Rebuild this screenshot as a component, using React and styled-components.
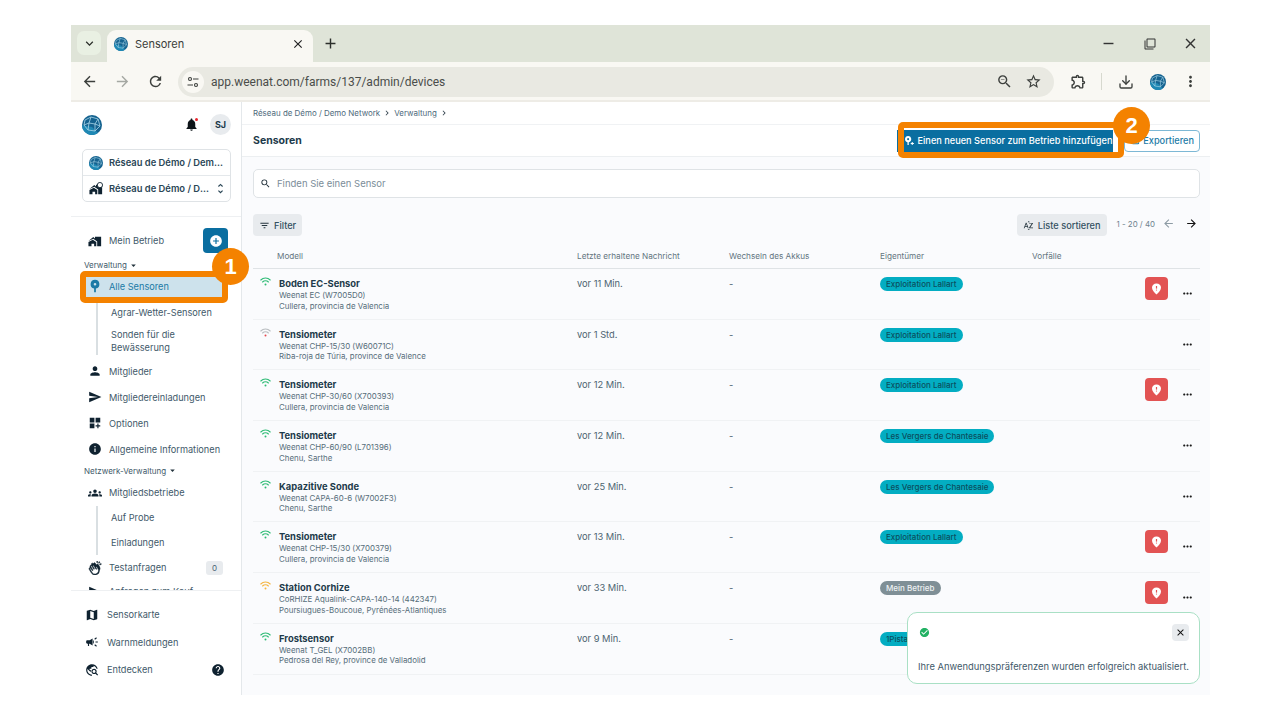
import React from "react";
import styled, { createGlobalStyle } from "styled-components";
import {
  MdAddCircle,
  MdArrowBack,
  MdArrowForward,
  MdCampaign,
  MdCheckCircle,
  MdClose,
  MdDashboardCustomize,
  MdFilterList,
  MdFilterNone,
  MdHelp,
  MdInfo,
  MdKeyboardArrowDown,
  MdAdd,
  MdMap,
  MdMoreHoriz,
  MdMoreVert,
  MdNotifications,
  MdOutlineExtension,
  MdOutlineFileUpload,
  MdOutlineStarBorder,
  MdPerson,
  MdRefresh,
  MdRemove,
  MdSearch,
  MdSend,
  MdSortByAlpha,
  MdTravelExplore,
  MdUnfoldMore,
  MdGroups,
  MdZoomOut,
  MdChevronRight,
  MdArrowDropDown,
} from "react-icons/md";
import { PiHandsClappingFill } from "react-icons/pi";
import { LuDownload } from "react-icons/lu";

const GlobalStyle = createGlobalStyle`
  html, body {
    margin: 0;
    background: #fff;
    font-family: Inter, "Noto Sans", sans-serif;
    color: #1d3a4a;
  }
  * { box-sizing: border-box; }
`;

const Window = styled.div`
  position: relative;
  width: 1139px;
  height: 670px;
  margin: 25px 0 0 71px;
  display: flex;
  flex-direction: column;
  overflow: hidden;
  background: #fff;
`;

const TabStrip = styled.div`
  height: 37px;
  flex: none;
  background: #dfe4d8;
  display: flex;
  align-items: flex-end;
  padding-left: 6px;
  color: #2c2f2b;
`;

const TabListButton = styled.div`
  width: 24px;
  height: 24px;
  margin: 0 6px 7px 0;
  border-radius: 7px;
  background: #e9f0e3;
  display: flex;
  align-items: center;
  justify-content: center;
  font-size: 15px;
`;

const Tab = styled.div`
  width: 206px;
  height: 32px;
  background: #f9f8f3;
  border-radius: 9px 9px 0 0;
  display: flex;
  align-items: center;
  padding: 0 8px 4px 7px;
  gap: 7px;
  font-size: 11px;
  color: #3a3d3a;
  svg:last-child {
    margin-left: auto;
    font-size: 14px;
    color: #222;
  }
`;

const NewTab = styled.div`
  margin: 0 0 8px 9px;
  font-size: 17px;
  height: 22px;
  display: flex;
  align-items: center;
`;

const WindowControls = styled.div`
  margin-left: auto;
  height: 100%;
  display: flex;
  align-items: center;
  gap: 26.5px;
  padding: 0 11px 0 0;
  font-size: 17px;
  color: #333;
`;

const Toolbar = styled.div`
  height: 40px;
  flex: none;
  background: #f9f8f3;
  border-bottom: 2px solid #eeece6;
  display: flex;
  align-items: center;
  padding: 1px 11px 0 10px;
  color: #3c3f3c;
  font-size: 17px;
`;

const NavArrows = styled.div`
  display: flex;
  gap: 16px;
  margin-right: 14px;
`;

const Faded = styled.span`
  display: flex;
  color: #a5a8a2;
`;

const UrlBar = styled.div`
  width: 877px;
  height: 30px;
  border-radius: 15px;
  background: #e9e9e2;
  display: flex;
  align-items: center;
  padding: 0 12px 0 4px;
  margin-right: 16px;
`;

const SiteInfo = styled.div`
  width: 22px;
  height: 22px;
  border-radius: 50%;
  background: #f9f8f3;
  display: flex;
  align-items: center;
  justify-content: center;
  margin-right: 7px;
`;

const UrlText = styled.span`
  font-family: Roboto, sans-serif;
  font-size: 12px;
  color: #4a4d4a;
  flex: 1;
`;

const UrlActions = styled.div`
  display: flex;
  gap: 12px;
`;

const ToolbarDivider = styled.div`
  width: 1px;
  height: 17px;
  background: #d7d9cf;
  margin: 0 16px 0 14px;
`;

const ToolbarIcons = styled.div`
  display: flex;
  align-items: center;
  gap: 16px;
`;

const AppArea = styled.div`
  flex: 1;
  display: flex;
  min-height: 0;
`;

const Sidebar = styled.aside`
  width: 171px;
  flex: none;
  border-right: 1px solid #e4e8eb;
  background: #fff;
  display: flex;
  flex-direction: column;
`;

const SidebarTop = styled.div`
  height: 115px;
  flex: none;
  padding: 11px 10px 0 11px;
  border-bottom: 1px solid #eef0f2;
`;

const BrandRow = styled.div`
  display: flex;
  align-items: center;
  height: 23px;
  margin-bottom: 13px;
`;

const BellWrap = styled.div`
  position: relative;
  margin-left: auto;
  margin-right: 11px;
  display: flex;
  font-size: 15px;
  color: #0d1418;
  &::after {
    content: "";
    position: absolute;
    top: 1px;
    right: 1px;
    width: 3px;
    height: 3px;
    border-radius: 50%;
    background: #e9262e;
  }
`;

const Avatar = styled.div`
  width: 21px;
  height: 21px;
  border-radius: 50%;
  background: #e8ebee;
  display: flex;
  align-items: center;
  justify-content: center;
  font-size: 9px;
  font-weight: 700;
  color: #1d3a4a;
`;

const Selector = styled.div`
  width: 149px;
  height: 53px;
  border: 1px solid #dfe3e6;
  border-radius: 5px;
  display: flex;
  flex-direction: column;
`;

const SelectorRow = styled.div`
  flex: 1;
  display: flex;
  align-items: center;
  gap: 6px;
  padding: 0 3px 0 6px;
  font-size: 9.4px;
  font-weight: 600;
  color: #2a4656;
  & + & {
    border-top: 1px solid #e4e8eb;
  }
  svg {
    flex: none;
  }
`;

const SelectorText = styled.span`
  flex: 1;
  min-width: 0;
  white-space: nowrap;
  overflow: hidden;
  text-overflow: ellipsis;
`;

const UnfoldIcon = styled(MdUnfoldMore)`
  margin-left: -4px;
`;

const NavScroll = styled.nav`
  flex: 1;
  min-height: 0;
  overflow: hidden;
  padding: 11px 13px 0 14px;
`;

const NavRow = styled.div`
  height: ${(p) => p.$height || 26}px;
  display: flex;
  align-items: center;
  gap: 7px;
  padding-left: 3px;
  font-size: 9.2px;
  color: #3f5a6a;
  white-space: nowrap;
  svg {
    flex: none;
    font-size: 14px;
    color: #0f2230;
  }
`;

const NavActive = styled(NavRow)`
  color: #1b7aa6;
  background: #cde2ec;
  margin-right: 6px;
  svg {
    color: #1b7aa6;
  }
`;

const SectionLabel = styled.div`
  height: 14px;
  margin: ${(p) => p.$top || 0}px 0 ${(p) => p.$bottom || 1}px -1px;
  display: flex;
  align-items: center;
  font-size: 8px;
  color: #3f5a6a;
  svg {
    font-size: 11px;
    margin-left: 1px;
    color: #22323c;
  }
`;

const AddButton = styled.div`
  width: 25px;
  height: 25px;
  margin-left: auto;
  border-radius: 4px;
  background: #0a6ea0;
  display: flex;
  align-items: center;
  justify-content: center;
  svg {
    color: #fff;
    font-size: 14px;
  }
`;

const SubList = styled.div`
  margin: 0 0 ${(p) => p.$gap || 0}px 11px;
  padding-left: 13px;
  border-left: 2px solid #d9dfe2;
  font-size: 9.2px;
  color: #3f5a6a;
`;

const SubItem = styled.div`
  min-height: ${(p) => p.$height || 24.5}px;
  display: flex;
  align-items: center;
  line-height: 13px;
`;

const CountBadge = styled.span`
  margin-left: auto;
  margin-right: 5px;
  width: 17px;
  height: 14px;
  border-radius: 3px;
  background: #e8ebee;
  display: flex;
  align-items: center;
  justify-content: center;
  font-size: 8px;
  color: #4b6474;
`;

const ClapIcon = styled(PiHandsClappingFill)`
  stroke: #0f2230;
  stroke-width: 10px;
`;

const SidebarFooter = styled.div`
  height: 105px;
  flex: none;
  border-top: 1px solid #eef0f2;
  padding: 10px 13px 0 14px;
`;

const FooterRow = styled(NavRow)`
  height: 27.5px;
  padding-left: 0;
  gap: 8px;
  color: #3f5a6a;
`;

const HelpIcon = styled(MdHelp)`
  margin-left: auto;
  margin-right: 3px;
`;

const Main = styled.main`
  flex: 1;
  min-width: 0;
  background: #fafbfd;
  display: flex;
  flex-direction: column;
`;

const Breadcrumbs = styled.div`
  height: 23px;
  flex: none;
  background: #fff;
  border-bottom: 1px solid #f0f2f4;
  display: flex;
  align-items: center;
  padding-left: 11px;
  font-size: 7.95px;
  color: #4e6a7c;
  svg {
    font-size: 10px;
    margin: 0 2px;
    color: #33424d;
  }
`;

const PageHeader = styled.div`
  height: 32px;
  flex: none;
  background: #fff;
  border-bottom: 1px solid #eceff1;
  display: flex;
  align-items: center;
  padding: 0 10px 0 11px;
  justify-content: space-between;
`;

const PageTitle = styled.h1`
  margin: 0;
  font-size: 10.5px;
  font-weight: 700;
  color: #1d3a4a;
`;

const HeaderActions = styled.div`
  display: flex;
  align-items: center;
  gap: 11px;
`;

const PrimaryButton = styled.div`
  height: 22px;
  width: 216px;
  display: flex;
  align-items: center;
  justify-content: center;
  gap: 3px;
  padding-left: 6px;
  background: #0a6ea0;
  color: #fff;
  font-size: 9.2px;
  font-weight: 500;
  white-space: nowrap;
`;

const ExportButton = styled.div`
  height: 22px;
  width: 76px;
  border: 1px solid #7db8d5;
  border-radius: 4px;
  display: flex;
  align-items: center;
  justify-content: flex-end;
  padding-right: 5px;
  gap: 2px;
  color: #1b7aa6;
  background: #fff;
  font-size: 9.2px;
  font-weight: 500;
`;

const Content = styled.div`
  flex: 1;
  min-height: 0;
  padding: 12px 10px 0 11px;
`;

const SearchBox = styled.div`
  height: 29px;
  background: #fff;
  border: 1px solid #dfe3e6;
  border-radius: 5px;
  display: flex;
  align-items: center;
  gap: 6px;
  padding-left: 6px;
  font-size: 9.5px;
  color: #7b8d99;
  svg {
    font-size: 11px;
    color: #1d2c36;
  }
`;

const FilterBar = styled.div`
  margin-top: 16px;
  height: 22px;
  display: flex;
  align-items: center;
  padding-right: 2px;
`;

const GreyButton = styled.div`
  height: 22px;
  padding: 0 6px;
  border-radius: 4px;
  background: #e8ebee;
  display: flex;
  align-items: center;
  gap: 4px;
  font-size: 9.2px;
  font-weight: 500;
  color: #33505f;
  svg {
    font-size: 11px;
    color: #26363f;
  }
`;

const Pager = styled.div`
  display: flex;
  align-items: center;
  margin-left: 10px;
  font-size: 7.9px;
  color: #6f838f;
  gap: 7px;
  margin-top: -3px;
  svg {
    font-size: 13px;
  }
`;

const PagerSpacer = styled.div`
  flex: 1;
`;

const PrevArrow = styled(MdArrowBack)`
  color: #8d9ba4;
`;

const NextArrow = styled(MdArrowForward)`
  color: #111;
  margin-left: 3px;
`;

const grid = "26px 298px 152px 151px 152px 1fr";

const TableHead = styled.div`
  margin-top: 11px;
  height: 22px;
  display: grid;
  grid-template-columns: ${grid};
  align-items: center;
  border-bottom: 1px solid #dfe3e6;
  font-size: 8.2px;
  color: #63757f;
  padding-bottom: 3px;
`;

const ModelHead = styled.span`
  margin-left: -2px;
`;

const Row = styled.div`
  height: 50.7px;
  display: grid;
  grid-template-columns: ${grid};
  border-bottom: 1px solid #f0f2f4;
  padding-top: 9px;
  font-size: 9.3px;
  color: #4d6471;
`;

const Signal = styled.div`
  padding: 0 0 0 7px;
  margin-top: -1px;
  line-height: 0;
`;

const ModelName = styled.div`
  font-size: 9.4px;
  font-weight: 700;
  line-height: 12px;
  color: #1d3a4a;
`;

const ModelMeta = styled.div`
  font-size: 7.9px;
  line-height: 10.5px;
  color: #566d7a;
`;

const CellText = styled.div`
  line-height: 12px;
`;

const TagCell = styled.div`
  margin-top: -1px;
`;

const Tag = styled.span`
  display: inline-flex;
  align-items: center;
  height: 14px;
  padding: 0 6px;
  border-radius: 7px;
  font-size: 8px;
  font-weight: 500;
  white-space: nowrap;
  background: ${(p) => (p.$grey ? "#7f8f96" : "#03adc2")};
  color: ${(p) => (p.$grey ? "#eef2f3" : "#0b4f5e")};
`;

const Actions = styled.div`
  display: flex;
  justify-content: flex-end;
  align-items: flex-start;
  padding-right: 6px;
  gap: 13px;
  margin-top: -1px;
`;

const AlertButton = styled.div`
  width: 23px;
  height: 23px;
  border-radius: 4px;
  background: #e25353;
  display: flex;
  align-items: center;
  justify-content: center;
`;

const Dots = styled(MdMoreHoriz)`
  margin-top: 10px;
  font-size: 13px;
  color: #1a1a1a;
`;

const Highlight = styled.div`
  position: absolute;
  left: ${(p) => p.$x}px;
  top: ${(p) => p.$y}px;
  width: ${(p) => p.$w}px;
  height: ${(p) => p.$h}px;
  border: 6px solid #f48200;
  border-radius: 5px;
  pointer-events: none;
`;

const StepBadge = styled.div`
  position: absolute;
  left: ${(p) => p.$x}px;
  top: ${(p) => p.$y}px;
  width: 37px;
  height: 37px;
  border-radius: 50%;
  background: #f48200;
  color: #fff;
  font-family: "Liberation Sans", sans-serif;
  font-size: 22px;
  font-weight: 700;
  display: flex;
  align-items: center;
  justify-content: center;
`;

const Toast = styled.div`
  position: absolute;
  right: 10px;
  bottom: 11px;
  width: 293px;
  height: 72px;
  background: #fff;
  border: 1px solid #a9e0c5;
  border-radius: 10px;
  padding: 10px 10px 0 10px;
`;

const ToastTop = styled.div`
  display: flex;
  justify-content: space-between;
  align-items: center;
  height: 18px;
  padding-left: 1px;
  svg {
    font-size: 11px;
  }
`;

const ToastCheck = styled(MdCheckCircle)`
  color: #22b163;
`;

const ToastClose = styled.div`
  width: 17px;
  height: 17px;
  border-radius: 4px;
  background: #e8ebee;
  display: flex;
  align-items: center;
  justify-content: center;
  color: #111;
`;

const ToastText = styled.div`
  margin-top: 20px;
  font-size: 9.37px;
  color: #3f5a6a;
  white-space: nowrap;
`;

const Globe = ({ size = 20 }) => (
  <svg width={size} height={size} viewBox="0 0 20 20">
    <circle cx="10" cy="10" r="10" fill="#14628f" />
    <path d="M0 10 A10 10 0 0 0 16 18 L10 12 Z" fill="#1f88b4" />
    <path
      d="M3 5 L9 2 L16 4 L18 11 L13 16 L6 15 L2 10 Z M9 2 L7 8 L13 9 L16 4 M7 8 L2 10 M7 8 L6 15 M13 9 L13 16 M13 9 L18 11"
      fill="none"
      stroke="#a9d6e8"
      strokeWidth="0.8"
    />
  </svg>
);

const FarmIcon = ({ size = 15, check }) => (
  <svg width={size} height={size} viewBox="0 0 16 16">
    <path
      d="M0.5 8 L6 3.5 L8 5 V3 H15 V14 H10.5 V8.5 L6 5.5 L5.5 5.8 Z M0.5 9 L5.5 6.5 L9.5 9 V14 H7 V11 H4 V14 H0.5 Z"
      fill="#0f2230"
    />
    {check && <circle cx="12.5" cy="3.5" r="3" fill="#fff" stroke="#0f2230" />}
  </svg>
);

const SiteInfoIcon = () => (
  <svg width="12" height="12" viewBox="0 0 12 12" fill="none" stroke="#3c3f3c" strokeWidth="1.1">
    <circle cx="3" cy="3" r="1.5" />
    <path d="M6 3 H11.5 M0.5 9 H6" />
    <circle cx="9" cy="9" r="1.5" />
  </svg>
);

const SensorIcon = () => (
  <svg width="14" height="14" viewBox="0 0 16 16">
    <path
      d="M8 1 A5 5 0 0 1 9 10.9 V15 H7 V10.9 A5 5 0 0 1 8 1 Z M8 4.5 A1.5 1.5 0 1 0 8 7.5 A1.5 1.5 0 1 0 8 4.5 Z"
      fill="#1b7aa6"
      fillRule="evenodd"
    />
  </svg>
);

const AddSensorIcon = () => (
  <svg width="11" height="11" viewBox="0 0 12 12">
    <path
      d="M4.5 1 A3.5 3.5 0 0 1 5.2 7.9 V11 H3.8 V7.9 A3.5 3.5 0 0 1 4.5 1 Z M4.5 3.4 A1.1 1.1 0 1 0 4.5 5.6 A1.1 1.1 0 1 0 4.5 3.4 Z"
      fill="#fff"
      fillRule="evenodd"
    />
    <path d="M9 7.5 V11 M7.3 9.2 H10.8" stroke="#fff" strokeWidth="1.1" />
  </svg>
);

const PinIcon = () => (
  <svg width="11" height="12" viewBox="0 0 11 12">
    <path
      d="M5.5 0.5 C8.2 0.5 10 2.4 10 4.8 C10 7.2 7.6 9.6 5.5 11.5 C3.4 9.6 1 7.2 1 4.8 C1 2.4 2.8 0.5 5.5 0.5 Z"
      fill="#fff"
    />
    <path d="M5.5 3 V5.6" stroke="#e25353" strokeWidth="1.2" />
    <circle cx="5.5" cy="7" r="0.6" fill="#e25353" />
  </svg>
);

const WifiIcon = ({ color, dot }) => (
  <svg width="11" height="9" viewBox="0 0 11 9">
    <g fill="none" stroke={color} strokeWidth="1.1" strokeLinecap="round">
      <path d="M0.8 3 A6.6 6.6 0 0 1 10.2 3" />
      <path d="M2.6 5 A4 4 0 0 1 8.4 5" />
    </g>
    <circle cx="5.5" cy="7.4" r="1" fill={dot || color} />
  </svg>
);

const sensors = [
  { name: "Boden EC-Sensor", model: "Weenat EC (W7005D0)", place: "Cullera, provincia de Valencia", last: "vor 11 Min.", owner: "Exploitation Lallart", color: "#2dbb75", alert: true },
  { name: "Tensiometer", model: "Weenat CHP-15/30 (W60071C)", place: "Riba-roja de Túria, province de Valence", last: "vor 1 Std.", owner: "Exploitation Lallart", color: "#b9bdc0", dot: "#e5484d" },
  { name: "Tensiometer", model: "Weenat CHP-30/60 (X700393)", place: "Cullera, provincia de Valencia", last: "vor 12 Min.", owner: "Exploitation Lallart", color: "#2dbb75", alert: true },
  { name: "Tensiometer", model: "Weenat CHP-60/90 (L701396)", place: "Chenu, Sarthe", last: "vor 12 Min.", owner: "Les Vergers de Chantesaie", color: "#2dbb75" },
  { name: "Kapazitive Sonde", model: "Weenat CAPA-60-6 (W7002F3)", place: "Chenu, Sarthe", last: "vor 25 Min.", owner: "Les Vergers de Chantesaie", color: "#2dbb75" },
  { name: "Tensiometer", model: "Weenat CHP-15/30 (X700379)", place: "Cullera, provincia de Valencia", last: "vor 13 Min.", owner: "Exploitation Lallart", color: "#2dbb75", alert: true },
  { name: "Station Corhize", model: "CoRHIZE Aqualink-CAPA-140-14 (442347)", place: "Poursiugues-Boucoue, Pyrénées-Atlantiques", last: "vor 33 Min.", owner: "Mein Betrieb", grey: true, color: "#f5b53f", alert: true },
  { name: "Frostsensor", model: "Weenat T_GEL (X7002BB)", place: "Pedrosa del Rey, province de Valladolid", last: "vor 9 Min.", owner: "1Pistache", color: "#2dbb75" },
];

const SidebarNav = () => (
  <Sidebar>
    <SidebarTop>
      <BrandRow>
        <Globe size={20} />
        <BellWrap>
          <MdNotifications />
        </BellWrap>
        <Avatar>SJ</Avatar>
      </BrandRow>
      <Selector>
        <SelectorRow>
          <Globe size={14} />
          <SelectorText>Réseau de Démo / Demo Network</SelectorText>
        </SelectorRow>
        <SelectorRow>
          <FarmIcon size={14} check />
          <SelectorText>Réseau de Démo / Demo Network</SelectorText>
          <UnfoldIcon size={13} />
        </SelectorRow>
      </Selector>
    </SidebarTop>
    <NavScroll>
      <NavRow $height={25}>
        <FarmIcon size={14} />
        Mein Betrieb
        <AddButton>
          <MdAddCircle />
        </AddButton>
      </NavRow>
      <SectionLabel $top={5}>
        Verwaltung <MdArrowDropDown />
      </SectionLabel>
      <NavActive>
        <SensorIcon />
        Alle Sensoren
      </NavActive>
      <SubList $gap={3}>
        <SubItem $height={27}>Agrar-Wetter-Sensoren</SubItem>
        <SubItem $height={29}>
          Sonden für die
          <br />
          Bewässerung
        </SubItem>
      </SubList>
      <NavRow>
        <MdPerson />
        Mitglieder
      </NavRow>
      <NavRow>
        <MdSend />
        Mitgliedereinladungen
      </NavRow>
      <NavRow>
        <MdDashboardCustomize />
        Optionen
      </NavRow>
      <NavRow>
        <MdInfo />
        Allgemeine Informationen
      </NavRow>
      <SectionLabel $top={1.5} $bottom={2}>
        Netzwerk-Verwaltung <MdArrowDropDown />
      </SectionLabel>
      <NavRow>
        <MdGroups />
        Mitgliedsbetriebe
      </NavRow>
      <SubList>
        <SubItem>Auf Probe</SubItem>
        <SubItem>Einladungen</SubItem>
      </SubList>
      <NavRow>
        <ClapIcon />
        Testanfragen
        <CountBadge>0</CountBadge>
      </NavRow>
      <NavRow $height={22}>
        <MdSend />
        Anfragen zum Kauf
      </NavRow>
    </NavScroll>
    <SidebarFooter>
      <FooterRow>
        <MdMap />
        Sensorkarte
      </FooterRow>
      <FooterRow>
        <MdCampaign />
        Warnmeldungen
      </FooterRow>
      <FooterRow>
        <MdTravelExplore />
        Entdecken
        <HelpIcon />
      </FooterRow>
    </SidebarFooter>
  </Sidebar>
);

const App = () => (
  <>
    <GlobalStyle />
    <Window>
      <TabStrip>
        <TabListButton>
          <MdKeyboardArrowDown />
        </TabListButton>
        <Tab>
          <Globe size={14} />
          Sensoren
          <MdClose />
        </Tab>
        <NewTab>
          <MdAdd />
        </NewTab>
        <WindowControls>
          <MdRemove />
          <MdFilterNone size={12} />
          <MdClose />
        </WindowControls>
      </TabStrip>
      <Toolbar>
        <NavArrows>
          <MdArrowBack />
          <Faded>
            <MdArrowForward />
          </Faded>
          <MdRefresh />
        </NavArrows>
        <UrlBar>
          <SiteInfo>
            <SiteInfoIcon />
          </SiteInfo>
          <UrlText>app.weenat.com/farms/137/admin/devices</UrlText>
          <UrlActions>
            <MdZoomOut />
            <MdOutlineStarBorder />
          </UrlActions>
        </UrlBar>
        <MdOutlineExtension />
        <ToolbarDivider />
        <ToolbarIcons>
          <LuDownload size={16} />
          <Globe size={16} />
          <MdMoreVert />
        </ToolbarIcons>
      </Toolbar>
      <AppArea>
        <SidebarNav />
        <Main>
          <Breadcrumbs>
            Réseau de Démo / Demo Network
            <MdChevronRight />
            Verwaltung
            <MdChevronRight />
          </Breadcrumbs>
          <PageHeader>
            <PageTitle>Sensoren</PageTitle>
            <HeaderActions>
              <PrimaryButton>
                <AddSensorIcon />
                Einen neuen Sensor zum Betrieb hinzufügen
              </PrimaryButton>
              <ExportButton>
                <MdOutlineFileUpload size={11} />
                Exportieren
              </ExportButton>
            </HeaderActions>
          </PageHeader>
          <Content>
            <SearchBox>
              <MdSearch />
              Finden Sie einen Sensor
            </SearchBox>
            <FilterBar>
              <GreyButton>
                <MdFilterList />
                Filter
              </GreyButton>
              <PagerSpacer />
              <GreyButton>
                <MdSortByAlpha />
                Liste sortieren
              </GreyButton>
              <Pager>
                1 - 20 / 40
                <PrevArrow />
                <NextArrow />
              </Pager>
            </FilterBar>
            <TableHead>
              <span />
              <ModelHead>Modell</ModelHead>
              <span>Letzte erhaltene Nachricht</span>
              <span>Wechseln des Akkus</span>
              <span>Eigentümer</span>
              <span>Vorfälle</span>
            </TableHead>
            {sensors.map((s) => (
              <Row key={s.model}>
                <Signal>
                  <WifiIcon color={s.color} dot={s.dot} />
                </Signal>
                <div>
                  <ModelName>{s.name}</ModelName>
                  <ModelMeta>{s.model}</ModelMeta>
                  <ModelMeta>{s.place}</ModelMeta>
                </div>
                <CellText>{s.last}</CellText>
                <CellText>-</CellText>
                <TagCell>
                  <Tag $grey={s.grey}>{s.owner}</Tag>
                </TagCell>
                <Actions>
                  {s.alert && (
                    <AlertButton>
                      <PinIcon />
                    </AlertButton>
                  )}
                  <Dots />
                </Actions>
              </Row>
            ))}
          </Content>
        </Main>
      </AppArea>
      <Highlight $x={9} $y={246} $w={148} $h={32} />
      <StepBadge $x={141} $y={223}>1</StepBadge>
      <Highlight $x={827} $y={97} $w={226} $h={36} />
      <StepBadge $x={1042} $y={82}>2</StepBadge>
      <Toast>
        <ToastTop>
          <ToastCheck />
          <ToastClose>
            <MdClose />
          </ToastClose>
        </ToastTop>
        <ToastText>Ihre Anwendungspräferenzen wurden erfolgreich aktualisiert.</ToastText>
      </Toast>
    </Window>
  </>
);

export default App;
